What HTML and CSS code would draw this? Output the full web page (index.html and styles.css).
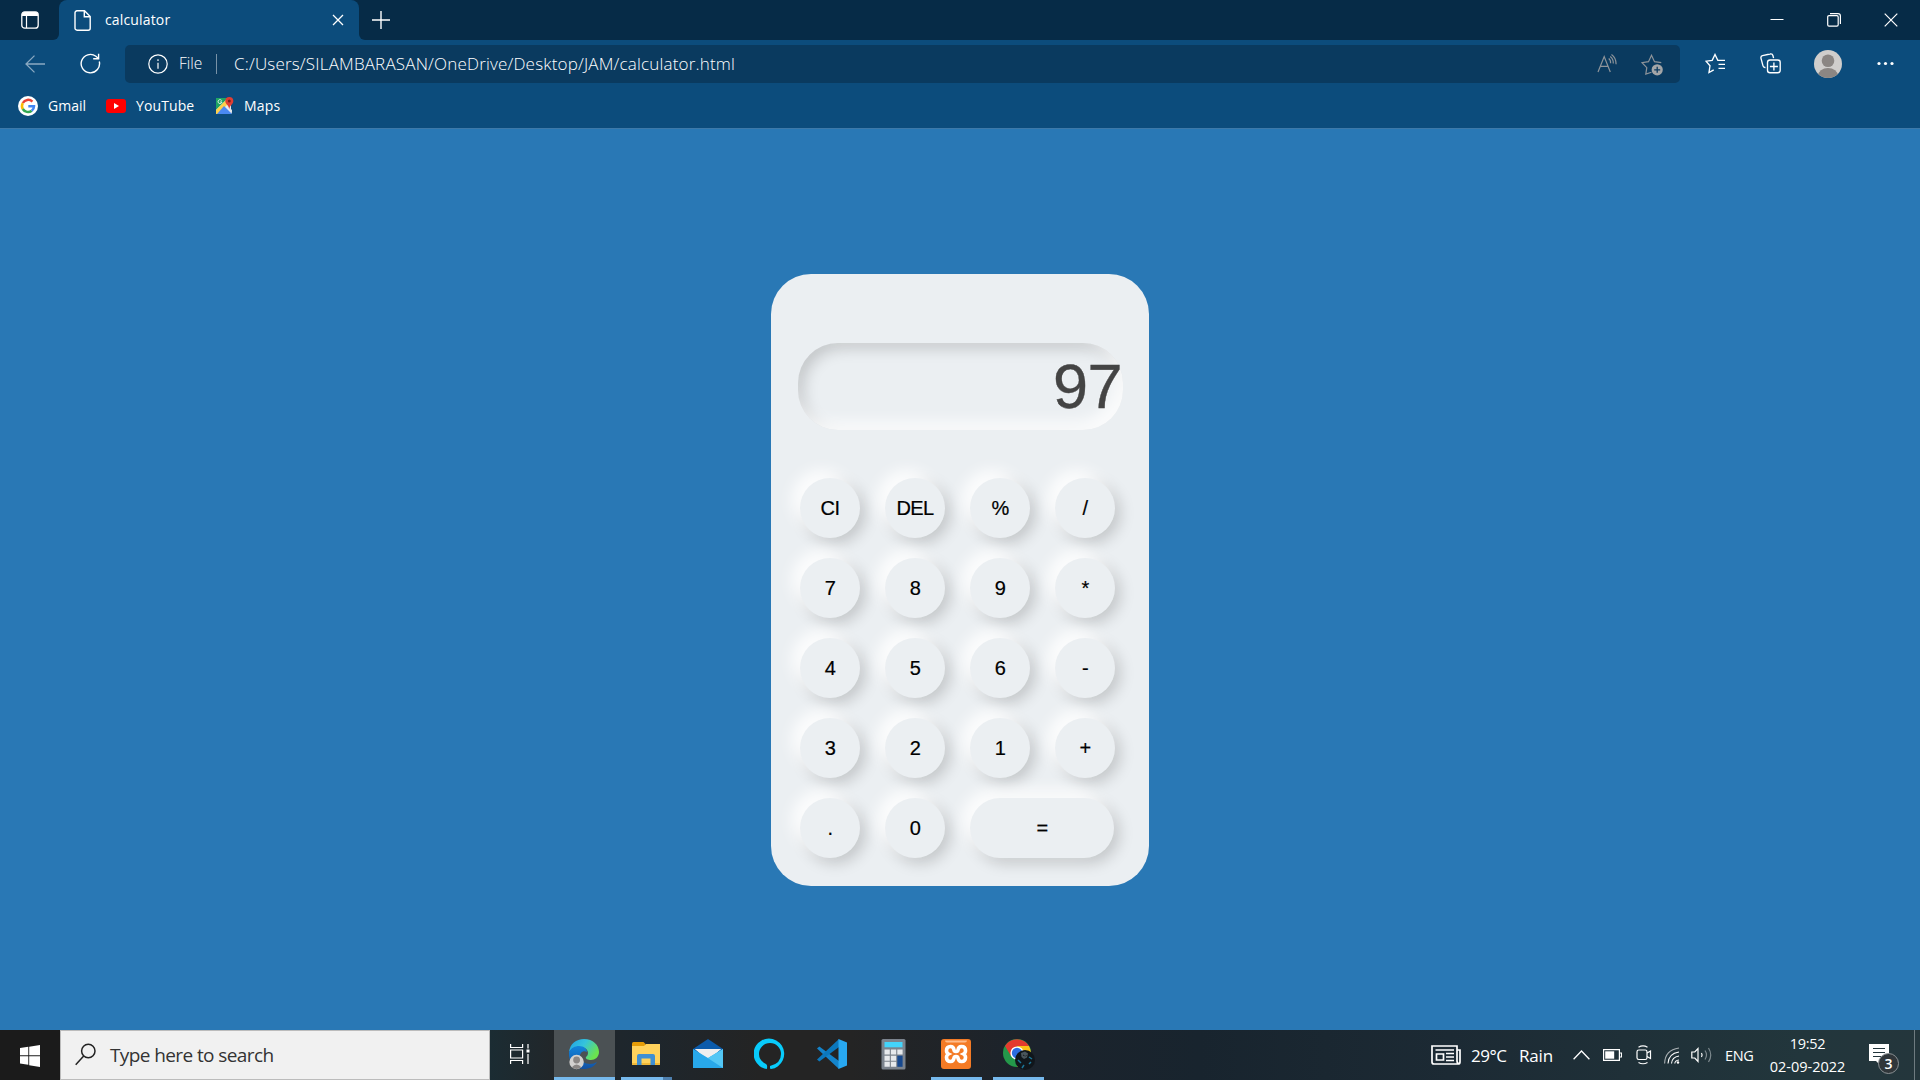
FILE: index.html
```html
<!DOCTYPE html>
<html lang="en">
<head>
<meta charset="utf-8">
<title>calculator</title>
<link rel="stylesheet" href="styles.css">
</head>
<body>
<header class="browser">
  <div class="tabstrip">
    <div class="strip-left">
      <svg width="20" height="20" viewBox="0 0 20 20"><rect x="1.8" y="1.8" width="16.4" height="16.4" rx="3" fill="none" stroke="#fff" stroke-width="1.3"/><path d="M2 6V4.5Q2 2 4.500 2h11Q18 2 18 4.500V6z" fill="#fff"/><path d="M6.500 6v12" stroke="#fff" stroke-width="1.2"/></svg>
    </div>
    <div class="tab-slot">
      <div class="tab">
        <svg class="page-icon" width="17" height="21" viewBox="0 0 17 21" fill="none" stroke="#fff" stroke-width="1.4"><path d="M3 .8h7.500l5.700 5.700v11.700a2 2 0 0 1-2 2H3a2 2 0 0 1-2-2V2.800a2 2 0 0 1 2-2z"/><path d="M10.300 1v5.700H16"/></svg>
        <span class="tab-title">calculator</span>
        <svg width="12" height="12" viewBox="0 0 12 12" stroke="#fff" stroke-width="1.3"><path d="M1 1l10 10M11 1L1 11"/></svg>
      </div>
    </div>
    <div class="strip-right">
      <svg width="18" height="18" viewBox="0 0 18 18" stroke="#fff" stroke-width="1.4"><path d="M9 0v18M0 9h18"/></svg>
      <div class="window-controls">
        <svg width="14" height="14" viewBox="0 0 14 14" stroke="#fff"><path d="M.5 6.500h13"/></svg>
        <svg width="14" height="14" viewBox="0 0 14 14" fill="none" stroke="#fff" stroke-width="1.2"><rect x=".7" y="2.600" width="10.500" height="10.500" rx="1.300"/><path d="M3 .6h8Q13.400.6 13.400 3v8"/></svg>
        <svg width="14" height="14" viewBox="0 0 14 14" stroke="#fff" stroke-width="1.2"><path d="M.7.7l12.600 12.600M13.300.7L.7 13.300"/></svg>
      </div>
    </div>
  </div>
  <div class="toolbar">
    <svg class="back" width="20" height="18" viewBox="0 0 20 18" fill="none" stroke="#8aa9c2" stroke-width="1.300"><path d="M20 9H1M9.500.6L1 9l8.500 8.400"/></svg>
    <svg class="reload" width="21" height="21" viewBox="0 0 21 21" fill="none" stroke="#fff" stroke-width="1.400"><path d="M19.300 8.500a9.200 9.200 0 1 1-3.400-5.200l2.600 2.200"/><path d="M18.600.8v5h-5.400"/></svg>
    <div class="address">
      <svg width="20" height="20" viewBox="0 0 20 20" fill="none" stroke="#fff" stroke-width="1.200"><circle cx="10" cy="10" r="9.200"/><path d="M10 8.700v6M10 5.300v1.700"/></svg>
      <span class="scheme">File</span>
      <i class="divider"></i>
      <span class="url">C:/Users/SILAMBARASAN/OneDrive/Desktop/JAM/calculator.html</span>
      <svg class="read" width="20" height="20" viewBox="0 0 20 20" fill="none" stroke="#8e949a" stroke-width="1.200"><path d="M1 18L7.200 2.600 13.300 18M3.400 12.300H11M11.700 4.500q2.200 1.500 1.900 4.800M13.200 2.400q3.300 2.300 3.100 7.100M14.500.5q4.600 3.200 4.600 9.800"/></svg>
      <svg class="fav" width="22" height="22" viewBox="0 0 22 22"><path d="M10.500 18.200l-5.700 1.900 1-6.500L1 8.700l6.500-1L10.500 1.300l3 6.400 6.800 1" fill="none" stroke="#8e949a" stroke-width="1.200"/><circle cx="16.200" cy="15.800" r="5.600" fill="#a3a5a7"/><path d="M16.200 12.800v6M13.200 15.800h6" stroke="#0b3a60" stroke-width="1.300"/></svg>
    </div>
    <svg class="favorites" width="21" height="21" viewBox="0 0 21 21" fill="none" stroke="#fff" stroke-width="1.350"><path d="M8.700 16.800l-4.700 2.700 1-6.700L1 8.200l6.200-.9L10 1.500l2.800 5.900H20M13.500 11.300H20M13.500 15.300H20"/></svg>
    <svg class="collections" width="21" height="21" viewBox="0 0 21 21" fill="none" stroke="#fff" stroke-width="1.350"><path d="M5.500 14.500q-2 .3-2.500-1.600L1 5.300Q.5 3.200 2.500 2.700L10 1q2.300-.6 2.900 1.500l.7 2.700"/><rect x="7.500" y="7" width="12.700" height="12.700" rx="2.500"/><path d="M13.900 9.500v8M9.900 13.500h8"/></svg>
    <svg class="profile" width="28" height="28" viewBox="0 0 28 28"><defs><clipPath id="pc"><circle cx="14" cy="14" r="14"/></clipPath></defs><circle cx="14" cy="14" r="14" fill="#d0cecc"/><g clip-path="url(#pc)" fill="#8b8683"><circle cx="14" cy="10.700" r="6.300"/><ellipse cx="14" cy="26" rx="10" ry="8"/></g></svg>
    <svg class="more" width="17" height="5" viewBox="0 0 17 5" fill="#fff"><circle cx="2" cy="2.500" r="1.600"/><circle cx="8.500" cy="2.500" r="1.600"/><circle cx="15" cy="2.500" r="1.600"/></svg>
  </div>
  <nav class="bookmarks">
    <svg width="20" height="20" viewBox="0 0 20 20"><circle cx="10" cy="10" r="10" fill="#fff"/><g fill="none" stroke-width="2.500"><path d="M14.400 5.700A6 6 0 0 0 4.800 7" stroke="#ea4335"/><path d="M4.800 7a6 6 0 0 0 0 6" stroke="#fbbc05"/><path d="M4.800 13a6 6 0 0 0 8.900 1.700" stroke="#34a853"/><path d="M13.700 14.700Q16 12.900 16 10.200H10.300" stroke="#4285f4"/></g></svg>
    <span class="gmail">Gmail</span>
    <svg width="20" height="14" viewBox="0 0 20 14"><rect width="20" height="14" rx="3" fill="#f00"/><path d="M8 4l5 3-5 3z" fill="#fff"/></svg>
    <span class="youtube">YouTube</span>
    <svg width="20" height="20" viewBox="0 0 20 20"><path d="M1 2h15v16H1z" fill="#e8eaed"/><path d="M1 2h12L1 14z" fill="#1fa463"/><path d="M1 14L11 4l3 3L3 18H1z" fill="#ffd04b"/><path d="M9 10l8 8H2z" fill="#4a89f3"/><path d="M11 8l6 6v4z" fill="#dfe3e8"/><path d="M6.800 4.700A2 2 0 1 0 7 6H5" fill="none" stroke="#fff" stroke-width=".8"/><path d="M14.300 1a4 4 0 0 1 4 4c0 3.300-3.300 4-4 8-.7-4-4-4.700-4-8a4 4 0 0 1 4-4z" fill="#df3f34"/><circle cx="14.300" cy="5" r="1.500" fill="#7d201b"/></svg>
    <span class="maps">Maps</span>
  </nav>
</header>

<main class="page">
  <section class="calculator">
    <div class="display">97</div>
    <div class="keys">
      <button>CI</button><button>DEL</button><button>%</button><button>/</button>
      <button>7</button><button>8</button><button>9</button><button>*</button>
      <button>4</button><button>5</button><button>6</button><button>-</button>
      <button>3</button><button>2</button><button>1</button><button>+</button>
      <button>.</button><button>0</button><button class="equals">=</button>
    </div>
  </section>
</main>

<footer class="taskbar">
  <div class="start"><svg width="20" height="22" viewBox="0 0 20 22" fill="#fff"><path d="M0 3l8.300-1.200v8.500H0zM9.200 1.700L20 0v10.300H9.200zM0 11.300h8.300v8.400L0 18.600zM9.200 11.300H20V22L9.200 20.200z"/></svg></div>
  <div class="search">
    <svg width="21" height="23" viewBox="0 0 21 23" fill="none" stroke="#222" stroke-width="1.500"><circle cx="13.300" cy="8" r="6.700"/><path d="M8.700 13L.7 21.800"/></svg>
    <span>Type here to search</span>
  </div>
  <div class="task view"><svg width="22" height="22" viewBox="0 0 22 22" fill="none" stroke="#fff" stroke-width="1.200"><path d="M1.600 1v3.500h12V1M1.600 21v-3.500h12V21M1.600 7h12v8h-12zM19 1v4.500M19 11v10"/><path d="M17.500 6.500h3v3h-3z" fill="#fff" stroke="none"/></svg></div>
  <div class="task edge">
    <svg width="32" height="32" viewBox="0 0 32 32"><defs><linearGradient id="eg" x1="0" y1="0" x2="1" y2=".5"><stop offset="0" stop-color="#1ea0e6"/><stop offset=".5" stop-color="#35c3dc"/><stop offset="1" stop-color="#6be34e"/></linearGradient><linearGradient id="eb" x2="0" y2="1"><stop stop-color="#1285dc"/><stop offset="1" stop-color="#1251a3"/></linearGradient></defs><path d="M1 14C2 6 8 1 16 1c9 0 15 6 15 13 0 5-4 8-8 8-3 0-6-1-5-3 1-1 2-2 2-4 0-4-4-6-8-6-5 0-9 2-11 5z" fill="url(#eg)"/><path d="M1 14c2-4 6-6 10-6 5 0 8 3 8 6-4-2-7 1-7 4 0 5 5 8 10 8 3 0 5-1 7-2-3 5-8 7-13 7C7 31 0 24 1 14z" fill="url(#eb)"/><circle cx="8.600" cy="24" r="7.200" fill="#d3d1cf"/><circle cx="8.600" cy="22" r="3.400" fill="#8a8684"/><path d="M3.800 29.200q4.800-5.500 9.600 0-4.800 3.500-9.600 0z" fill="#8a8684"/></svg>
  </div>
  <div class="task explorer"><svg width="30" height="26" viewBox="0 0 30 26"><path d="M1 2.500q0-1.500 1.500-1.500h10l2 2v4H1z" fill="#e59c07"/><path d="M1 5h12l2-2h14v21H1z" fill="#ffd25c"/><path d="M1 22h28v2H1z" fill="#f0b838"/><path d="M6 24V15q0-2 2-2h14q2 0 2 2v9h-4.500v-6.500h-9V24z" fill="#3f8fd3"/></svg></div>
  <div class="task mail"><svg width="32" height="30" viewBox="0 0 32 30"><path d="M1 10L16 0l15 10v6H1z" fill="#0b5bab"/><path d="M3 10h26l-13 12z" fill="#efefef"/><path d="M1 10l15 9 15-9v19H1z" fill="#28a8ea"/><path d="M31 10v19L13 17.300l3 1.700z" fill="#53c7f5"/><path d="M3 10h26L16 18.500z" fill="#efefef"/></svg></div>
  <div class="task alexa"><svg width="32" height="32" viewBox="0 0 32 32"><path d="M12.800 31A15.300 15.300 0 1 1 17 31q-1 0-1-1.500v-1.500q11-2.500 11-12A11 11 0 1 0 5 16q0 6.500 7 10 1.800 1 .8 5z" fill="#08cbfb"/></svg></div>
  <div class="task vscode"><svg width="32" height="32" viewBox="0 0 32 32"><path d="M1 10.500l2.300-2L23 23v8z" fill="#1484cb"/><path d="M1 21.500l2.300 2L23 9V1z" fill="#0b78bd"/><path d="M22.500 1L31 4.500v23L22.500 31z" fill="#28a8f1"/></svg></div>
  <div class="task calc"><svg width="25" height="32" viewBox="0 0 25 32"><rect x=".5" y="1" width="24" height="30.500" rx="1.500" fill="#7b838d"/><rect x="3.500" y="4" width="18" height="5.300" fill="#43d4fb"/><path d="M3.500 11.500h5.300v5H3.500zM9.900 11.500h5.300v5H9.900zM16.300 11.500h5.300v5h-5.300zM3.500 17.700h5.300v5H3.500zM9.900 17.700h5.300v5H9.900zM3.500 23.800h5.300v5H3.500zM9.900 23.800h5.300v5H9.900z" fill="#e6e9ec"/><path d="M16.300 17.700h5.300v11.100h-5.300z" fill="#16488e"/></svg></div>
  <div class="task xampp"><svg width="30" height="30" viewBox="0 0 30 30"><rect width="30" height="30" rx="3" fill="#f47b26"/><path d="M4 1.500h22q0 2-2 2H6q-2 0-2-2z" fill="#ffbd8b"/><path d="M9.500 7.500Q12.500 7.500 13 11q.2 1.500 2 1.500t2-1.500q.5-3.500 3.500-3.500 4 0 4 4 0 2.500-2 3.500 2 1 2 3.500 0 4-4 4-3 0-3.500-3.500-.2-1.500-2-1.500t-2 1.500q-.5 3.500-3.500 3.500-4 0-4-4 0-2.500 2-3.500-2-1-2-3.500 0-4 4-4z" fill="none" stroke="#fff" stroke-width="3.600"/></svg></div>
  <div class="task chrome"><svg width="32" height="32" viewBox="0 0 32 32"><circle cx="14" cy="15" r="14" fill="#24984a"/><path d="M2 8A14 14 0 0 1 26 8H14L8 18z" fill="#e33b2e"/><path d="M26 8a14 14 0 0 1-12 21l6-11-6-10z" fill="#fbc116"/><circle cx="14" cy="15" r="6.600" fill="#fff"/><circle cx="14" cy="15" r="5.200" fill="#2c6de0"/><circle cx="22" cy="22" r="10" fill="#10161b"/><path d="M18 15l4-1.500 3 2-1 4-3 1.500-2.500-2z" fill="#4a555c"/><path d="M20 17l1.500.8M23.500 17.500l-1 .6" stroke="#10161b"/><path d="M15 22l3 3M26 26l2-2M19 30l2-3M26 19l3 2" stroke="#1b7597" stroke-width="1.500"/></svg></div>
  <div class="tray">
    <svg class="news" width="30" height="20" viewBox="0 0 30 20" fill="none" stroke="#fff" stroke-width="1.700"><path d="M26 5h3v12q0 2-2 2H3q-2 0-2-2V1h25v15q0 2 1.500 2M4.500 5H23"/><path d="M5.500 9h7v6h-7zM15 8.500h8M15 12h8M15 15.500h8"/></svg>
    <span class="temp">29°C</span><span class="rain">Rain</span>
    <svg class="chev" width="17" height="10" viewBox="0 0 17 10" fill="none" stroke="#fff" stroke-width="1.300"><path d="M.6 9.200L8.500 1l7.900 8.200"/></svg>
    <svg class="battery" width="19" height="12" viewBox="0 0 19 12"><path d="M.6.6h15.800v10.800H.6zM16.500 4h2v4h-2" fill="none" stroke="#fff" stroke-width="1.200"/><path d="M2.200 2.300h9v7.400h-9z" fill="#fff"/></svg>
    <svg class="meet" width="16" height="20" viewBox="0 0 16 20" fill="none" stroke="#fff" stroke-width="1.200"><rect x="1" y="5" width="10" height="9.500" rx="1.800"/><path d="M11 8l3.500-2v7.500L11 11.500M2.500 2.200q4.500-2.600 9 0M2.500 17.500q4.500 2.500 9 0"/></svg>
    <svg class="wifi" width="16" height="17" viewBox="0 0 16 17" fill="none" stroke="#fff" stroke-width="1.100"><path d="M.6 16.500Q1 3 15 1" stroke="#aab0b3"/><path d="M4 16.500Q4.500 6.500 15 5M7.500 16.500Q8 10 15 9M10.800 16.500Q11 13.300 15 13"/><circle cx="14" cy="15.500" r="1.200" fill="#fff" stroke="none"/></svg>
    <svg class="volume" width="21" height="18" viewBox="0 0 21 18" fill="none" stroke="#fff" stroke-width="1.200"><path d="M.8 6h3L7 2.500v13L3.800 12h-3zM10.500 7q1.200 2 0 4"/><path d="M14 4.500q3 4.500 0 9M17.500 2q4.500 7 0 14" stroke="#7d898e"/></svg>
    <span class="lang">ENG</span>
    <div class="clock"><span class="time">19:52</span><span class="date">02-09-2022</span></div>
    <svg class="notice" width="32" height="32" viewBox="0 0 32 32"><path d="M1 1h20v17H12v4l-4-4H1z" fill="#fff"/><path d="M5 5.500h12M5 9.500h12M5 13.500h8" stroke="#22343b" stroke-width="1.200"/><circle cx="20.500" cy="20.500" r="10" fill="#30363a" stroke="#8b9194"/><text x="20.500" y="25.500" text-anchor="middle" class="badge">3</text></svg>
    <i class="peek"></i>
  </div>
</footer>
</body>
</html>
```
FILE: styles.css
```css
* { box-sizing: border-box; }
body {
  margin: 0;
  width: 1920px;
  height: 1080px;
  overflow: hidden;
  display: flex;
  flex-direction: column;
  background: #2978b5;
  color: #fff;
  font-family: "Open Sans", "Noto Sans", sans-serif;
}
svg { display: block; flex: none; }
span { white-space: nowrap; flex: none; }

.browser { height: 129px; background: #0c4c7c; border-bottom: 1px solid #3d79a9; }
.tabstrip { display: flex; height: 40px; }
.strip-left { width: 59px; background: #062b47; border-bottom-right-radius: 6px; padding: 10px 0 0 20px; }
.tab-slot { width: 300px; background: linear-gradient(#062b47 20px, #0c4c7c 20px); }
.tab { height: 40px; padding: 0 15px 0 15px; display: flex; align-items: center; background: #0c4c7c; border-radius: 8px 8px 0 0; }
.tab-title { flex: 1; margin-left: 14px; padding-bottom: 2px; font-size: 14px; letter-spacing: .15px; }
.strip-right { flex: 1; display: flex; align-items: center; justify-content: space-between; padding: 0 22px 1px 13px; background: #062b47; border-bottom-left-radius: 6px; }
.window-controls { display: flex; gap: 43px; }

.toolbar { display: flex; align-items: center; height: 47px; padding-left: 25px; }
.reload { margin: 0 24px 0 35px; }
.address { width: 1555px; height: 38px; margin-top: 1px; display: flex; align-items: center; padding: 0 17px 1px 23px; background: #0a3a5f; border-radius: 5px; }
.scheme { margin-left: 11px; width: 26px; padding-bottom: 1px; font-size: 15.500px; font-weight: 300; }
.divider { width: 1px; height: 20px; margin: 0 17px 0 11px; background: #7892a7; }
.url { flex: 1; padding-bottom: 1px; font-size: 17px; font-weight: 300; letter-spacing: .18px; }
.fav { margin: 2px 0 0 24px; }
.favorites { margin-left: 25px; }
.collections { margin-left: 34px; }
.profile { margin-left: 33px; }
.more { margin-left: 35px; }

.bookmarks { display: flex; align-items: center; height: 38px; padding-left: 18px; font-size: 14px; }
.bookmarks span { padding-bottom: 1px; }
.bookmarks .gmail { width: 68px; padding-left: 10px; }
.bookmarks .youtube { width: 89px; padding-left: 10px; letter-spacing: .1px; }
.bookmarks .maps { padding-left: 9px; letter-spacing: .2px; }

.page { flex: 1; display: flex; justify-content: center; align-items: flex-start; padding-top: 145px; }
.calculator { width: 378px; height: 612px; padding: 69px 27px 0; background: #ebeff2; border-radius: 40px; font-family: "Liberation Sans", Arial, sans-serif; }
.display {
  width: 325px;
  height: 87px;
  padding-right: 1px;
  border-radius: 40px;
  color: #444;
  font-size: 63px;
  letter-spacing: -.5px;
  line-height: 87px;
  text-align: right;
  -webkit-text-stroke: .4px #444;
  box-shadow: inset -8px -8px 15px rgba(255,255,255,.85), inset 5px 5px 15px rgba(0,0,0,.18);
}
.keys { display: grid; grid-template-columns: repeat(4, 60px); gap: 20px 25px; margin: 48px 0 0 2px; }
.keys button {
  width: 60px;
  height: 60px;
  padding: 0;
  border: 0;
  border-radius: 40px;
  background: #ebeff2;
  color: #000;
  font: 20px "Liberation Sans", Arial, sans-serif;
  letter-spacing: -.6px;
  -webkit-text-stroke: .2px #000;
  box-shadow: -8px -8px 15px rgba(255,255,255,.9), 5px 5px 15px rgba(0,0,0,.18);
}
.keys .equals { grid-column: span 2; width: 144px; }

.taskbar { display: flex; height: 50px; background: linear-gradient(90deg, #1b1b1b 0, #1b1b1b 60px, #1b2c33 490px, #222629 560px, #1d262d 640px, #242424 760px, #242424 850px, #1b232c 1040px, #18242e 1200px, #1c2a34 1450px, #22363c 1800px, #24363c 1920px); }
.start { width: 60px; padding: 15px 0 0 20px; }
.search { width: 430px; display: flex; align-items: center; padding-left: 14px; background: #f1f1f1; border: 1px solid #bcbcbc; color: #333; font-size: 19px; }
.search svg { margin-top: -2px; }
.search span { margin-left: 14px; letter-spacing: -.6px; }
.task { height: 50px; display: flex; align-items: center; justify-content: center; border-bottom: 3px solid transparent; }
.view { width: 60px; }
.edge { width: 61px; margin-left: 4px; padding-right: 2px; background: #4b5154; border-color: #76b9ed; }
.explorer { width: 51px; margin-left: 6px; padding-right: 2px; border-image: linear-gradient(90deg, #76b9ed 40px, #4e7fae 40px) 3; border-width: 0 0 3px; border-style: solid; }
.mail { width: 51px; margin-left: 10px; }
.alexa { width: 51px; margin-left: 11px; }
.vscode { width: 51px; margin-left: 11px; }
.calc { width: 51px; margin-left: 11px; }
.xampp { width: 51px; margin-left: 12px; padding-right: 2px; border-color: #76b9ed; }
.chrome { width: 51px; margin-left: 11px; border-color: #76b9ed; }
.tray { flex: 1; display: flex; align-items: center; justify-content: flex-start; padding-left: 387px; }
.temp { width: 48px; margin-left: 10px; font-size: 17px; letter-spacing: -.5px; }
.rain { width: 34px; font-size: 17px; letter-spacing: -.2px; }
.chev { margin-left: 20px; }
.battery { margin-left: 13px; }
.meet { margin-left: 14px; }
.wifi { margin-left: 12px; }
.volume { margin-left: 11px; }
.lang { width: 29px; margin-left: 13px; font-size: 14.500px; letter-spacing: -.3px; }
.clock { width: 79px; margin-left: 14px; height: 50px; display: flex; flex-direction: column; align-items: center; font-size: 14.500px; line-height: 23px; padding-top: 2px; }
.time { letter-spacing: -.3px; }
.date { letter-spacing: 0; }
.notice { margin: 8px 0 0 21px; }
.badge { font: 600 14px "Open Sans", sans-serif; fill: #fff; }
.peek { width: 1px; height: 50px; margin-left: 14px; background: #6e7b80; }
```
